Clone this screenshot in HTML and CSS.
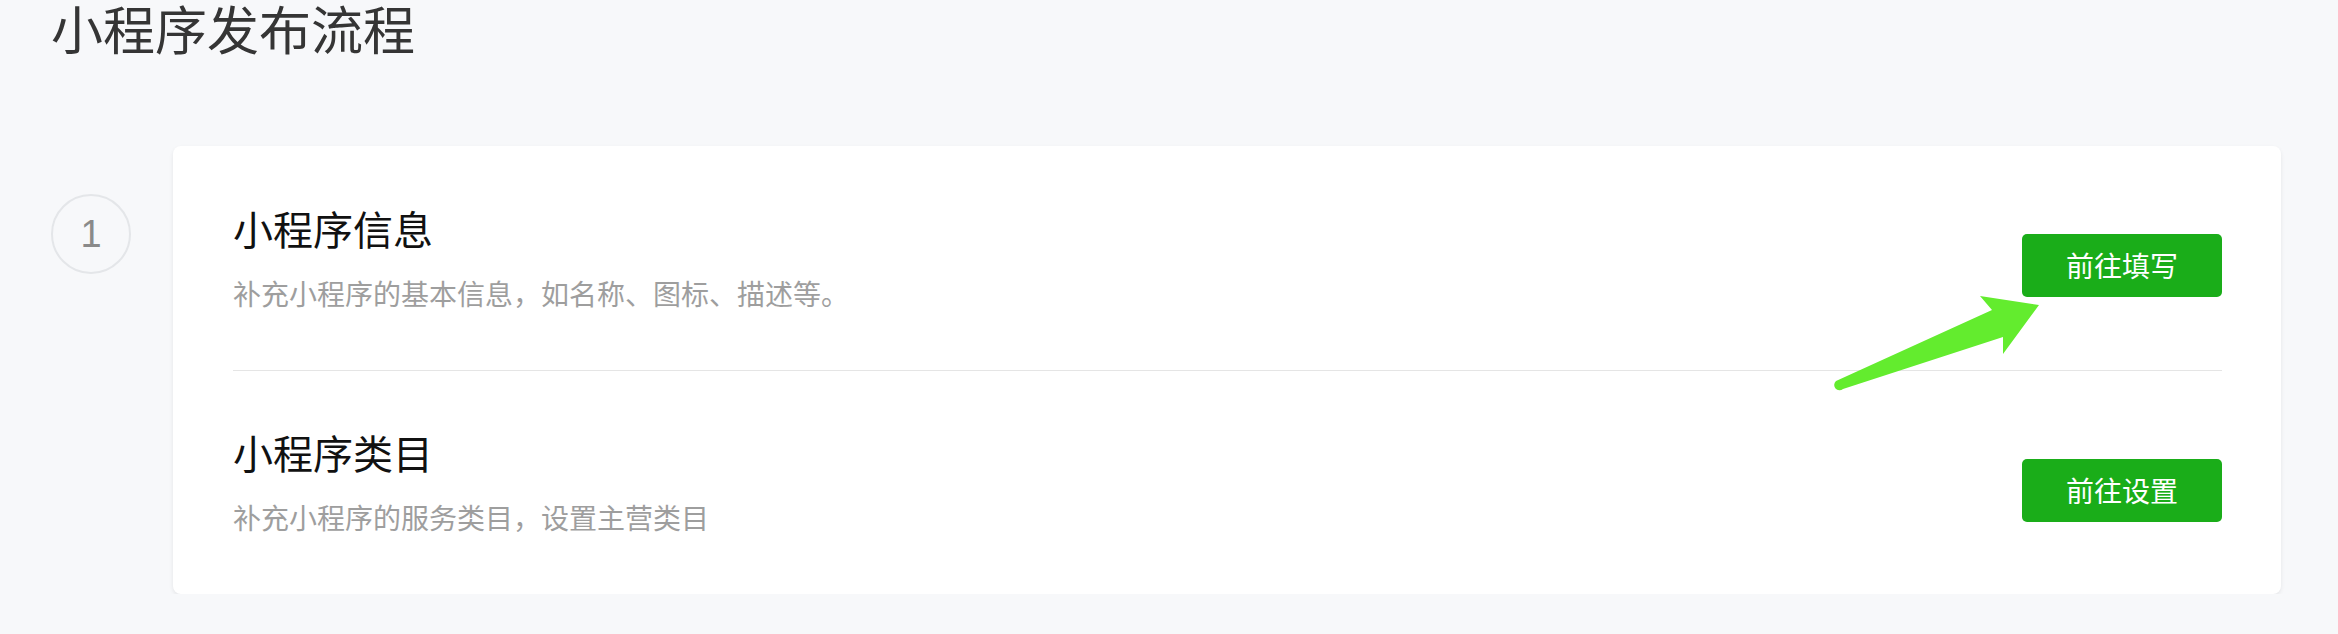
FILE: index.html
```html
<!DOCTYPE html>
<html lang="zh-CN">
<head>
<meta charset="utf-8">
<title>小程序发布流程</title>
<link rel="stylesheet" href="styles.css">
</head>
<body>
<div class="page">
  <h1 class="page-title">小程序发布流程</h1>
  <div class="steps">
    <div class="step-num">1</div>
    <div class="card">
      <div class="row">
        <div class="info">
          <h2 class="row-title">小程序信息</h2>
          <p class="row-desc">补充小程序的基本信息，如名称、图标、描述等。</p>
        </div>
        <a class="btn">前往填写</a>
      </div>
      <div class="row row-split">
        <div class="info">
          <h2 class="row-title">小程序类目</h2>
          <p class="row-desc">补充小程序的服务类目，设置主营类目</p>
        </div>
        <a class="btn">前往设置</a>
      </div>
      <svg class="arrow" width="215" height="105" viewBox="0 0 215 105" aria-hidden="true">
        <path d="M6,91 L162,20 L150,6 L209,15 L173,64 L173,47 L13,99 A5.3 5.3 0 0 1 6,91 Z" fill="#63ec2e"/>
      </svg>
    </div>
  </div>
</div>
</body>
</html>
```

FILE: styles.css
```css
html, body {
  margin: 0;
  padding: 0;
}
body {
  background: #f7f8fa;
  font-family: "Noto Sans CJK SC", "Noto Sans", sans-serif;
}
.page {
  padding: 2px 57px 0 51px;
}
.page-title {
  margin: 0;
  font-size: 52px;
  line-height: 52px;
  font-weight: 400;
  color: #353535;
}
.steps {
  display: flex;
  align-items: flex-start;
  gap: 42px;
  margin-top: 92px;
}
.step-num {
  flex-shrink: 0;
  width: 80px;
  height: 80px;
  box-sizing: border-box;
  margin-top: 48px;
  border: 2px solid #e4e6e9;
  border-radius: 50%;
  display: flex;
  align-items: center;
  justify-content: center;
  font-family: "Liberation Sans", sans-serif;
  font-weight: 400;
  font-size: 38px;
  color: #8a8a8a;
}
.card {
  position: relative;
  flex: 1;
  background: #fff;
  border-radius: 8px;
  box-shadow: 0 2px 4px rgba(0, 0, 0, 0.08);
  padding: 0 59px 0 60px;
}
.row {
  display: flex;
  align-items: center;
  justify-content: space-between;
  height: 224px;
  box-sizing: border-box;
}
.row-split {
  border-top: 1px solid #e5e5e5;
}
.row-title {
  margin: 0;
  font-size: 40px;
  line-height: 48px;
  font-weight: 400;
  color: #111;
}
.row-desc {
  margin: 21px 0 0;
  font-size: 28px;
  line-height: 40px;
  color: #9e9e9e;
}
.btn {
  display: block;
  width: 200px;
  height: 63px;
  line-height: 63px;
  margin-top: 15px;
  text-align: center;
  background: #1aad19;
  color: #fff;
  font-size: 28px;
  border-radius: 5px;
}
.arrow {
  position: absolute;
  left: 1657px;
  top: 144px;
}
```
